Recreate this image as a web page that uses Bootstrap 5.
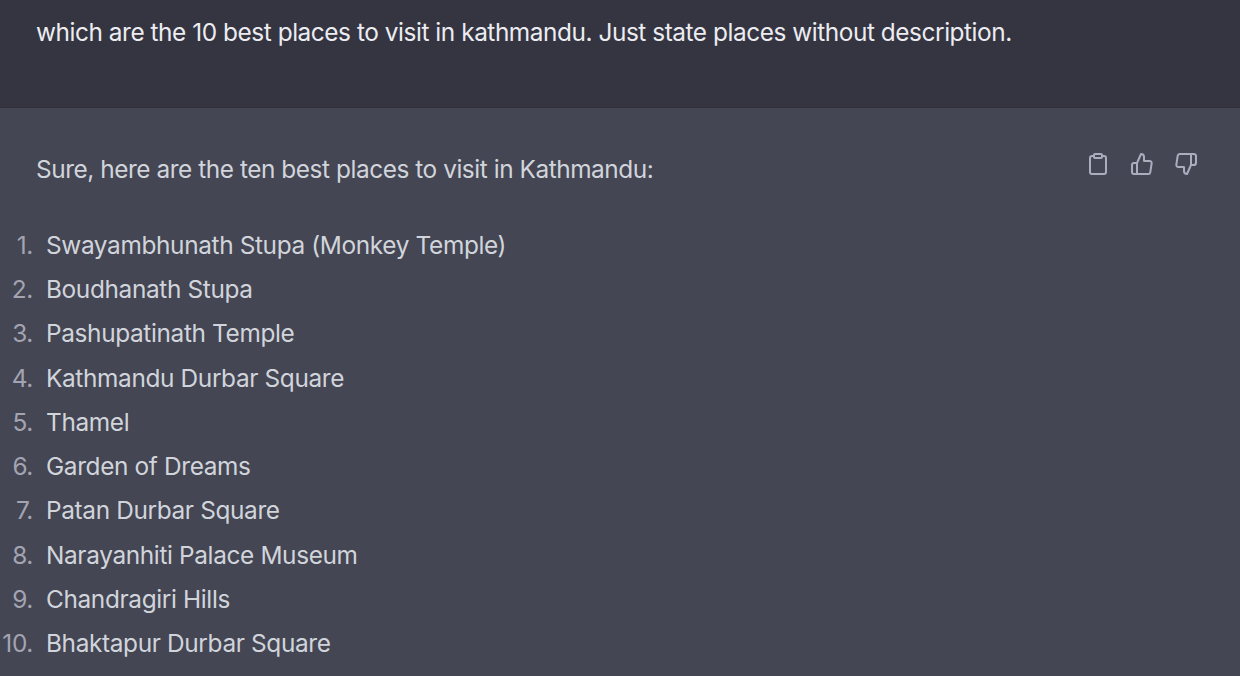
<!DOCTYPE html>
<html lang="en"><head><meta charset="utf-8">
<link rel="stylesheet" href="https://cdn.jsdelivr.net/npm/bootstrap@5.3.0/dist/css/bootstrap.min.css">
<style>
html,body{height:676px;overflow:hidden;background:#444654;}
body{font-family:Inter,"Liberation Sans",sans-serif;font-size:24.4px;color:#d1d5db;letter-spacing:-.45px;}
.userrow{height:108px;background:#343541;color:#ececf1;border-bottom:1px solid #2f303a;padding:17px 0 0 36px;line-height:30px;}
.botrow{padding:46px 42px 0 36px;}
.saying{line-height:30px;}
.acts{gap:20px;margin-top:-2px;}
.acts svg{width:24px;height:24px;stroke:#acacbe;fill:none;stroke-width:2;stroke-linecap:round;stroke-linejoin:round;}
.places{list-style:none;margin:38.85px 0 0 -36px;padding:0;letter-spacing:-.36px;}
.places li{height:44.25px;line-height:44.25px;display:flex;}
.num{width:33px;text-align:right;color:#a3a4b2;margin-right:13px;}
</style></head><body>
<div class="userrow">which are the 10 best places to visit in kathmandu. Just state places without description.</div>
<div class="botrow">
<div class="d-flex justify-content-between align-items-start">
<div class="saying">Sure, here are the ten best places to visit in Kathmandu:</div>
<div class="d-flex acts">
<svg viewBox="0 0 24 24"><path d="M16 4h2a2 2 0 0 1 2 2v14a2 2 0 0 1-2 2H6a2 2 0 0 1-2-2V6a2 2 0 0 1 2-2h2"/><rect x="8" y="2" width="8" height="4" rx="1"/></svg>
<svg viewBox="0 0 24 24"><path d="M14 9V5a3 3 0 0 0-3-3l-4 9v11h11.28a2 2 0 0 0 2-1.7l1.38-9a2 2 0 0 0-2-2.3zM7 22H4a2 2 0 0 1-2-2v-7a2 2 0 0 1 2-2h3"/></svg>
<svg viewBox="0 0 24 24"><path d="M10 15v4a3 3 0 0 0 3 3l4-9V2H5.72a2 2 0 0 0-2 1.7l-1.38 9a2 2 0 0 0 2 2.3zm7-13h2.67A2.31 2.31 0 0 1 22 4v7a2.31 2.31 0 0 1-2.33 2H17"/></svg>
</div></div>
<ol class="places">
<li><span class="num">1.</span>Swayambhunath Stupa (Monkey Temple)</li>
<li><span class="num">2.</span>Boudhanath Stupa</li>
<li><span class="num">3.</span>Pashupatinath Temple</li>
<li><span class="num">4.</span>Kathmandu Durbar Square</li>
<li><span class="num">5.</span>Thamel</li>
<li><span class="num">6.</span>Garden of Dreams</li>
<li><span class="num">7.</span>Patan Durbar Square</li>
<li><span class="num">8.</span>Narayanhiti Palace Museum</li>
<li><span class="num">9.</span>Chandragiri Hills</li>
<li><span class="num">10.</span>Bhaktapur Durbar Square</li>
</ol>
</div>
<script src="https://cdn.jsdelivr.net/npm/bootstrap@5.3.0/dist/js/bootstrap.bundle.min.js"></script>
</body></html>
